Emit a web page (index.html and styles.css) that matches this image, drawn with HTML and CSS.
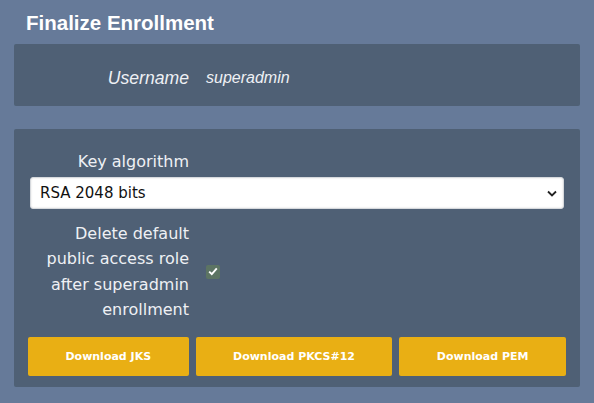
FILE: index.html
```html
<!DOCTYPE html>
<html lang="en">
<head>
  <meta charset="UTF-8">
  <title>Finalize Enrollment</title>
  <link rel="stylesheet" href="styles.css">
</head>
<body>

<h1 class="title">Finalize Enrollment</h1>

<div class="panel info">
  <div class="row">
    <span class="label italic">Username</span>
    <span class="value">superadmin</span>
  </div>
</div>

<div class="panel form">
  <div class="field">
    <label class="label" for="algo">Key algorithm</label>
    <div class="select-wrap">
      <select id="algo">
        <option>RSA 2048 bits</option>
        <option>RSA 4096 bits</option>
      </select>
      <svg class="chevron" width="10" height="7" viewBox="0 0 10 7"><path d="M1 1.5 L5 5.5 L9 1.5" fill="none" stroke="#222" stroke-width="1.8"/></svg>
    </div>
  </div>

  <div class="row check-row">
    <label class="label" for="del">Delete default public access role after superadmin enrollment</label>
    <span class="checkbox" id="del">
      <svg width="10" height="9" viewBox="0 0 10 9"><path d="M1.2 4.6 L3.8 7.2 L8.8 1.4" fill="none" stroke="#fff" stroke-width="1.9"/></svg>
    </span>
  </div>

  <div class="buttons">
    <button>Download JKS</button>
    <button>Download PKCS#12</button>
    <button>Download PEM</button>
  </div>
</div>

</body>
</html>
```

FILE: styles.css
```css
body {
  margin: 0;
  padding: 10px 14px 0;
  background-color: #667a99;
  font-family: "DejaVu Sans", sans-serif;
  color: #eef0f4;
}
.title {
  margin: 0 0 8px 12px;
  font-family: "Liberation Sans", Arial, sans-serif;
  font-size: 20.5px;
  font-weight: bold;
  color: #ffffff;
  line-height: 26px;
}
.panel {
  background-color: #4f6075;
  border-radius: 2px;
  padding: 0 16px;
}
.info {
  height: 62px;
  display: flex;
  align-items: center;
  margin-bottom: 23px;
}
.info .row {
  padding-top: 7px;
}
.row {
  display: flex;
  align-items: center;
  gap: 17px;
}
.label {
  width: 159px;
  flex: none;
  text-align: right;
  font-size: 16px;
  line-height: 25.5px;
}
.italic {
  font-family: "Liberation Sans", Arial, sans-serif;
  font-style: italic;
  font-size: 17.6px;
}
.value {
  font-family: "Liberation Sans", Arial, sans-serif;
  font-style: italic;
  font-size: 16px;
  padding-bottom: 2px;
}
.form {
  padding-top: 20px;
  padding-bottom: 11px;
}
.field .label {
  display: block;
  margin-bottom: 2px;
}
.select-wrap {
  position: relative;
}
.select-wrap select {
  width: 100%;
  height: 32px;
  appearance: none;
  border: 1px solid #d6d9dd;
  border-radius: 3px;
  background-color: #ffffff;
  font-family: "DejaVu Sans", sans-serif;
  font-size: 15px;
  color: #111;
  padding: 0 9px;
  box-shadow: inset 0 0 2px rgba(0, 0, 0, 0.15);
}
.chevron {
  position: absolute;
  right: 7px;
  top: 13px;
  pointer-events: none;
}
.check-row {
  margin-top: 12px;
}
.checkbox {
  width: 14px;
  height: 14px;
  background-color: #5c7463;
  border-radius: 2px;
  display: flex;
  align-items: center;
  justify-content: center;
}
.buttons {
  display: flex;
  gap: 7px;
  margin: 14px -2px 0;
}
.buttons button {
  flex: 1 1 auto;
  height: 39px;
  border: none;
  border-radius: 2px;
  background-color: #e9af14;
  color: #fff;
  font-family: "DejaVu Sans", sans-serif;
  font-weight: bold;
  font-size: 11px;
  cursor: pointer;
}
.buttons button:hover {
  background-color: #d99f08;
}
```
